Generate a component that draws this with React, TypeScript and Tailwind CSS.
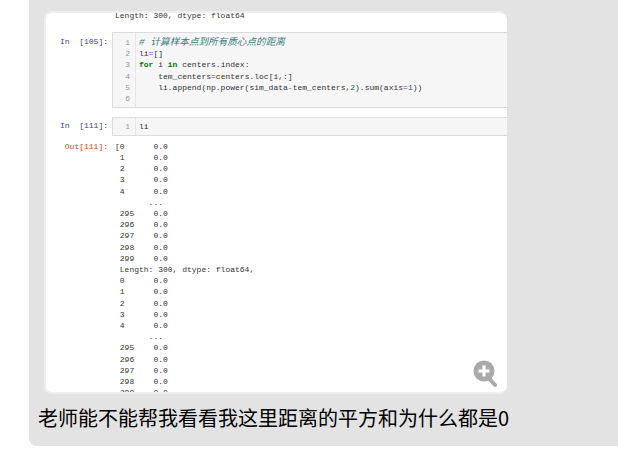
const MONO = "font-['Liberation_Mono','Noto_Sans_CJK_SC',monospace]";

const series = (first: string) => [
  `${first}      0.0`,
  " 1      0.0",
  " 2      0.0",
  " 3      0.0",
  " 4      0.0",
  "       ...",
  " 295    0.0",
  " 296    0.0",
  " 297    0.0",
  " 298    0.0",
  " 299    0.0",
];

const output = [
  ...series("[0"),
  " Length: 300, dtype: float64,",
  ...series(" 0"),
];

function Kw({ children }: { children: React.ReactNode }) {
  return <span className="font-bold text-[#008000]">{children}</span>;
}
function Op({ children }: { children: React.ReactNode }) {
  return <span className="text-[#aa22ff]">{children}</span>;
}
function Num({ children }: { children: React.ReactNode }) {
  return <span className="text-[#116644]">{children}</span>;
}

function Prompt({ label, out }: { label: string; out?: boolean }) {
  return (
    <pre className={`w-[62px] shrink-0 text-right ${MONO} text-[8px] leading-[11.2px] ${out ? "text-[#d84315]" : "text-[#303f9f]"}`}>
      {label}
    </pre>
  );
}

function CodeBox({ lines, pad }: { lines: React.ReactNode[]; pad: string }) {
  return (
    <div className={`flex-1 flex border-y border-l border-[#dcdcdc] bg-[#f6f6f6] ${MONO} text-[8px] leading-[11.2px] text-[#333]`}>
      <div className={`w-[23px] shrink-0 border-r border-[#e6e6e6] ${pad} pr-[5px] text-right text-[#999]`}>
        {lines.map((_, i) => (
          <div key={i} className="h-[11.2px]">{i + 1}</div>
        ))}
      </div>
      <pre className={`pl-[3px] ${pad} ${MONO}`}>
        {lines.map((l, i) => (
          <div key={i} className="h-[11.2px]">{l}</div>
        ))}
      </pre>
    </div>
  );
}

export default function App() {
  return (
    <div className="h-[451px] w-[618px] overflow-hidden bg-white pl-[29px]">
      <div className="h-[446px] rounded-bl-lg bg-[#e3e3e3] pl-[15px] pt-[11px]">
        <div className="relative h-[383px] w-[463px] overflow-hidden rounded-lg border-2 border-r-0 border-[#efefef] bg-white">
          <pre className={`-mt-[3px] pl-[69px] ${MONO} text-[8px] leading-[11.2px] text-[#333]`}>Length: 300, dtype: float64</pre>

          <div className="mt-[10.8px] flex gap-[4px]">
            <div className="pt-[4px]"><Prompt label="In  [105]:" /></div>
            <CodeBox
              pad="pt-[4px] pb-[3px]"
              lines={[
                <span className="text-[9.6px] italic text-[#408080]"># 计算样本点到所有质心点的距离</span>,
                <span>li<Op>=</Op>[]</span>,
                <span><Kw>for</Kw> i <Kw>in</Kw> centers.index:</span>,
                <span>    tem_centers<Op>=</Op>centers.loc[i,:]</span>,
                <span>    li.append(np.power(sim_data<Op>-</Op>tem_centers,<Num>2</Num>).sum(axis<Op>=</Op><Num>1</Num>))</span>,
                <span> </span>,
              ]}
            />
          </div>

          <div className="mt-[8.5px] flex gap-[4px]">
            <div className="pt-[3.5px]"><Prompt label="In  [111]:" /></div>
            <CodeBox pad="py-[3px]" lines={[<span>li</span>]} />
          </div>

          <div className="mt-[5px] flex gap-[7px]">
            <Prompt label="Out[111]:" out />
            <pre className={`${MONO} text-[8px] leading-[11.2px] text-[#333]`}>{output.join("\n")}</pre>
          </div>

          <svg className="absolute left-[426px] top-[347px]" width="26" height="28" viewBox="0 0 26 28" fill="none">
            <line x1="17.5" y1="19" x2="23" y2="25" stroke="#aaaaaa" strokeWidth="4" strokeLinecap="round" />
            <circle cx="12" cy="11" r="10.5" fill="#aaaaaa" />
            <path d="M12 5.5v11M6.5 11h11" stroke="#ffffff" strokeWidth="3.2" />
          </svg>
        </div>
        <p className="ml-[-6px] mt-[11px] font-['Noto_Sans_CJK_SC',sans-serif] text-[20px] leading-[26px] text-black">
          老师能不能帮我看看我这里距离的平方和为什么都是0
        </p>
      </div>
    </div>
  );
}
